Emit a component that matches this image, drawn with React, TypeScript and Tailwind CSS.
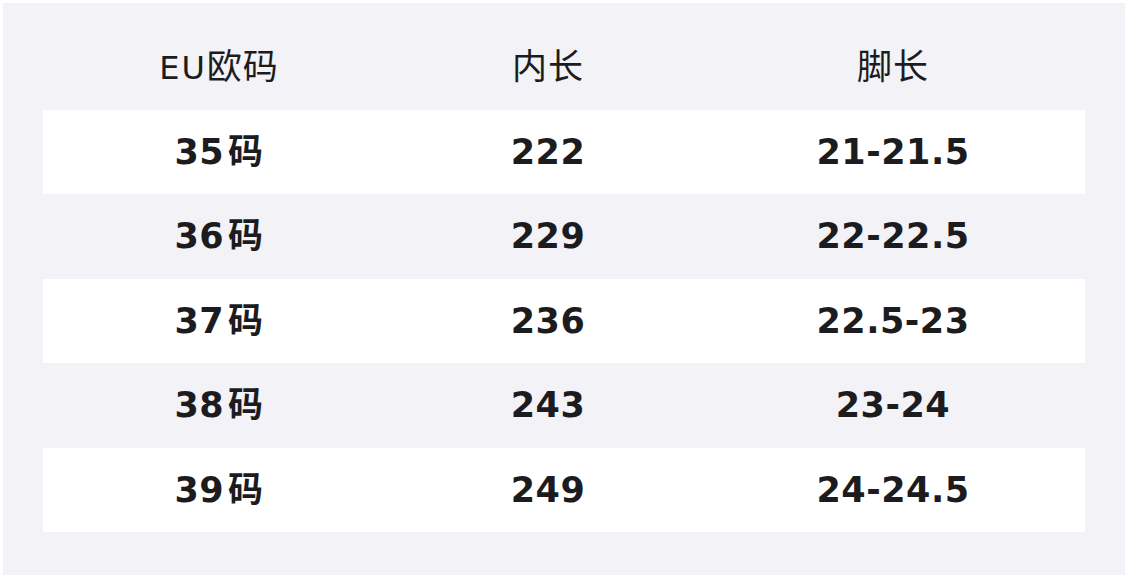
import React from "react";

const rows = [
  ["35", "222", "21-21.5"],
  ["36", "229", "22-22.5"],
  ["37", "236", "22.5-23"],
  ["38", "243", "23-24"],
  ["39", "249", "24-24.5"],
];

const font = { fontFamily: '"DejaVu Sans", "Noto Sans CJK SC", sans-serif' };

export default function App() {
  return (
    <div className="w-[1128px] h-[578px] bg-white p-[3px]" style={font}>
      <div className="h-full bg-[#f2f2f7] px-[40px] text-[#1c1c1e]">
        <div className="grid grid-cols-[352px_306px_384px] h-[107px] pt-[21px] items-center text-[32px] font-normal">
          <div className="text-center">
            <span className="tracking-[2px]">EU</span>
            <span className="text-[35px] tracking-[1px]">欧码</span>
          </div>
          <div className="text-center text-[35px] tracking-[1px]">内长</div>
          <div className="text-center text-[35px] tracking-[1px]">脚长</div>
        </div>
        {rows.map((r, i) => (
          <div
            key={i}
            className={`grid grid-cols-[352px_306px_384px] h-[84.4px] items-center text-[35px] font-bold ${i % 2 === 0 ? "bg-white" : ""}`}
          >
            <div className="text-center tracking-[0.5px]">
              {r[0]}
              <span className="ml-[4px]">码</span>
            </div>
            <div className="text-center tracking-[0.5px]">{r[1]}</div>
            <div className="text-center tracking-[0.5px]">{r[2]}</div>
          </div>
        ))}
      </div>
    </div>
  );
}
